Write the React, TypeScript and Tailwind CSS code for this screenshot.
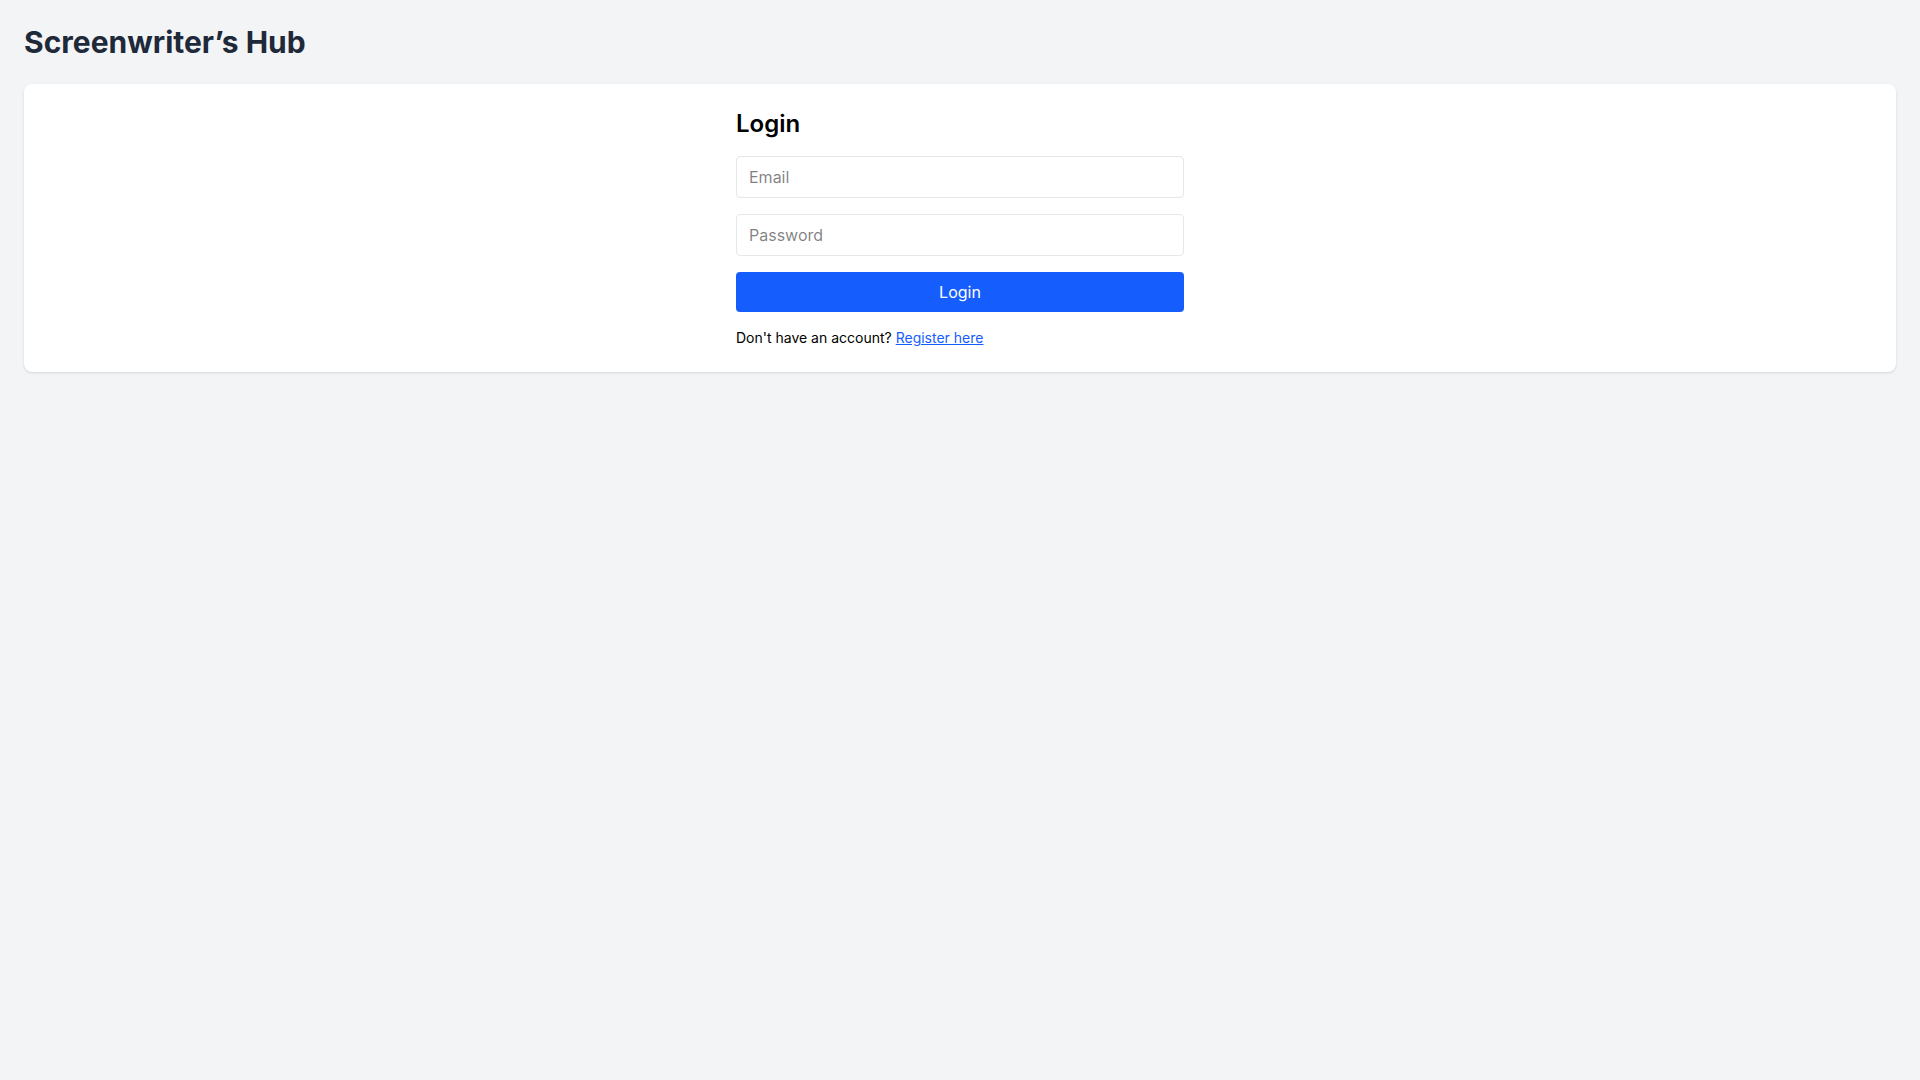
import { useState } from 'react';

export default function App() {
    const [email, setEmail] = useState('');
    const [password, setPassword] = useState('');

    return (
        <div className="min-h-screen bg-gray-100 p-6 font-['Inter',sans-serif]">
            <h1 className="text-3xl font-bold text-gray-800 mb-6">Screenwriter’s Hub</h1>

            <div className="bg-white rounded-lg shadow-sm p-6">
                <div className="max-w-md mx-auto">
                    <h2 className="text-2xl font-semibold text-black mb-4">Login</h2>
                    <form onSubmit={(e) => e.preventDefault()}>
                        <input
                            type="email"
                            value={email}
                            onChange={(e) => setEmail(e.target.value)}
                            placeholder="Email"
                            className="block w-full mb-4 px-3 py-2 text-base border border-gray-200 rounded focus:outline-none"
                        />
                        <input
                            type="password"
                            value={password}
                            onChange={(e) => setPassword(e.target.value)}
                            placeholder="Password"
                            className="block w-full mb-4 px-3 py-2 text-base border border-gray-200 rounded focus:outline-none"
                        />
                        <button
                            type="submit"
                            className="block w-full py-2 text-base text-white bg-blue-600 rounded"
                        >
                            Login
                        </button>
                    </form>
                    <p className="mt-4 text-sm text-black">
                        Don't have an account?{' '}
                        <a href="#" className="text-blue-600 underline">Register here</a>
                    </p>
                </div>
            </div>
        </div>
    );
}
